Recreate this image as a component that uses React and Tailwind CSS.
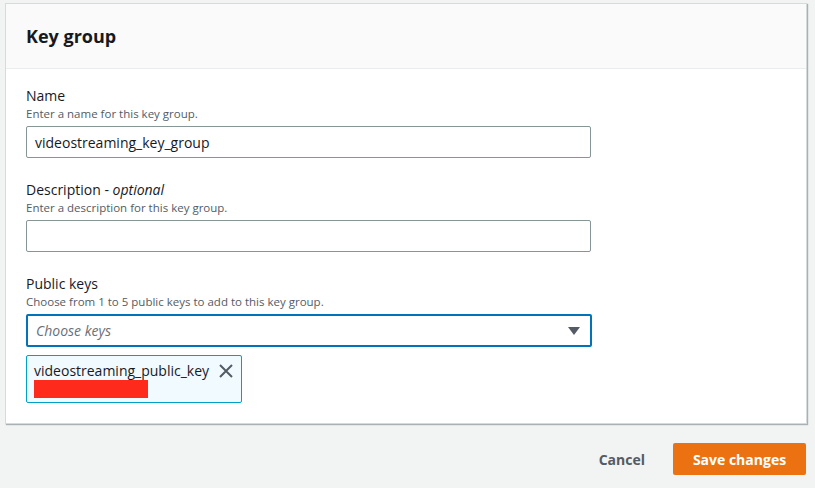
import React from 'react';

function Field({ label, optional, hint, children }) {
  return (
    <div className="flex flex-col">
      <label className="text-[14px] leading-[20px] text-[#16191f]">
        {label}
        {optional && (
          <>
            {' - '}
            <i>optional</i>
          </>
        )}
      </label>
      <p className="text-[11.5px] leading-[16px] text-[#545b64] mb-[4px]">{hint}</p>
      {children}
    </div>
  );
}

export default function App() {
  return (
    <div
      className="w-[815px] h-[488px] bg-[#f2f3f3] px-[5px] pt-[3px] overflow-hidden"
      style={{ fontFamily: '"Open Sans", "Noto Sans", sans-serif' }}
    >
      {/* Card */}
      <div className="w-[802px] h-[421px] bg-white border border-[#d5dbdb] shadow-[1px_1px_1px_rgba(0,28,36,0.3)]">
        <div className="h-[65px] bg-[#fafafa] border-b border-[#eaeded] px-[20px] flex items-center">
          <h2 className="text-[18px] font-bold text-[#16191f]">Key group</h2>
        </div>

        <div className="px-[20px] pt-[17px] flex flex-col gap-[22px]">
          <Field label="Name" hint="Enter a name for this key group.">
            <div className="w-[565px] h-[32px] border border-[#879596] rounded-[2px] px-[8px] flex items-center text-[14px] text-[#16191f]">
              videostreaming_key_group
            </div>
          </Field>

          <Field label="Description" optional hint="Enter a description for this key group.">
            <div className="w-[565px] h-[32px] border border-[#879596] rounded-[2px]" />
          </Field>

          <Field label="Public keys" hint="Choose from 1 to 5 public keys to add to this key group.">
            <div className="w-[566px] h-[33px] border-2 border-[#0073bb] rounded-[2px] pl-[8px] pr-[10px] flex items-center justify-between">
              <span className="text-[14px] italic text-[#687078]">Choose keys</span>
              <svg width="12" height="8" viewBox="0 0 12 8">
                <path d="M0 0 H12 L6 8 Z" fill="#545b64" />
              </svg>
            </div>
            <div className="mt-[8px] w-[216px] h-[48px] bg-[#f1faff] border border-[#00a1c9] rounded-[2px] pl-[7px] pr-[8px] pt-[5px] flex items-start justify-between">
              <div className="flex flex-col">
                <span className="text-[14px] leading-[20px] text-[#16191f]">videostreaming_public_key</span>
                <span className="block w-[114px] h-[18px] bg-[#fe2a1c] -mt-[1px]" />
              </div>
              <svg width="14" height="14" viewBox="0 0 14 14" className="mt-[3px]">
                <path d="M1 1 L13 13 M13 1 L1 13" stroke="#545b64" strokeWidth="2" />
              </svg>
            </div>
          </Field>
        </div>
      </div>

      {/* Actions */}
      <div className="flex justify-end items-center gap-[28px] pt-[19px] pr-[4px]">
        <button className="text-[14px] font-bold text-[#545b64]">Cancel</button>
        <button className="h-[32px] w-[133px] bg-[#ec7211] rounded-[2px] text-[14px] font-bold text-white">
          Save changes
        </button>
      </div>
    </div>
  );
}
